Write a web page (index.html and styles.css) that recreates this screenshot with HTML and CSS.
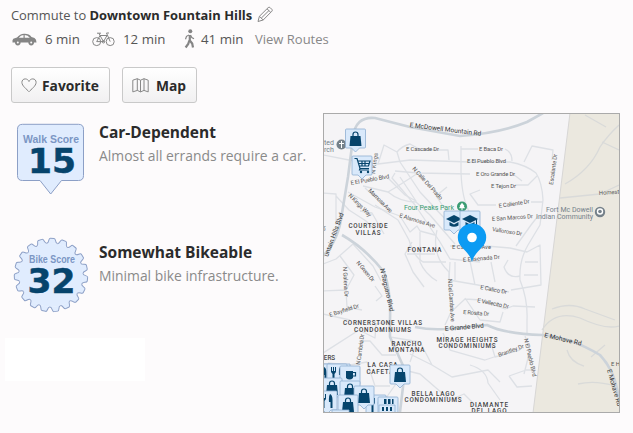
FILE: index.html
```html
<!DOCTYPE html>
<html lang="en">
<head>
    <meta charset="utf-8">
    <title>Walk Score</title>
    <link rel="stylesheet" href="styles.css">
</head>
<body>
    <div class="commute">
        <span>Commute to <strong>Downtown Fountain Hills</strong></span>
        <svg class="pencil" width="17" height="17" viewBox="0 0 17 17">
            <path d="M1 15.500 L2.400 10.300 L11.200 1.600 Q12.200 .8 13.200 1.700 L14.900 3.400 Q15.700 4.300 14.900 5.200 L6.200 14 Z M2.400 10.300 L6.200 14 M10 2.800 L13.800 6.400 M4.300 12.100 L12 4.500"/>
        </svg>
    </div>

    <div class="modes">
        <span class="mode car">
            <svg width="25" height="13" viewBox="0 0 25 13">
                <path d="M.5 9.500 V7.200 Q.7 5.500 3.500 5 L5 4.600 Q8 1 12 .8 Q17 .5 19.500 4 L22.500 5 Q24.500 6 24.500 9.500 Z"/>
                <circle cx="5.800" cy="9.600" r="2.800"/>
                <circle cx="19.200" cy="9.600" r="2.800"/>
                <path class="cut" d="M6.800 4.700 Q8.600 2.200 11.500 2 V4.700 Z M12.700 2 Q16 2 17.800 4.700 H12.700 Z"/>
                <circle class="cut" cx="5.800" cy="9.600" r="1"/>
                <circle class="cut" cx="19.200" cy="9.600" r="1"/>
            </svg>
            6 min
        </span>
        <span class="mode bike">
            <svg width="23" height="16" viewBox="0 0 23 16">
                <g class="line">
                    <circle cx="4.700" cy="10.600" r="4"/>
                    <circle cx="18.200" cy="10.600" r="4"/>
                    <path d="M4.700 10.600 L8 4.500 L11.500 10.600 Z M8 4.500 H15 L11.500 10.600 M18.200 10.600 L14.500 2 H17 M8 4.500 L7 2.200 M5 2.200 H9"/>
                    <circle cx="11.500" cy="10.800" r="1.200"/>
                </g>
            </svg>
            12 min
        </span>
        <span class="mode walk">
            <svg width="11" height="20" viewBox="0 0 11 20">
                <circle cx="6.300" cy="2.300" r="2"/>
                <g class="limbs">
                    <path d="M5.800 6 V11.500 L8.200 14.500 L9 18.500"/>
                    <path d="M5.300 11.500 L4.200 15 L1.600 18.500"/>
                    <path class="arm" d="M5 6 L2.500 7.300 L1.500 10.300 M6.500 6 L7.800 8.500 L10 9.800"/>
                </g>
            </svg>
            41 min
        </span>
        <a class="routes">View Routes</a>
    </div>

    <div class="buttons">
        <button class="favorite">
            <svg width="16" height="15" viewBox="0 0 16 15">
                <path d="M8 13.700 C5.800 11.300 1 8 .9 4.500 C.8 2.400 2.300 .9 4.200 .9 C6 .9 7.300 2 8 3.500 C8.700 2 10 .9 11.800 .9 C13.700 .9 15.200 2.400 15.100 4.500 C15 8 10.200 11.300 8 13.700 Z"/>
            </svg>
            Favorite
        </button>
        <button class="map-button">
            <svg width="17" height="15" viewBox="0 0 17 15">
                <path d="M.8 2.200 L5.300 .7 L8.500 2.200 L12 .7 L16.200 2.200 V13.900 L12 12.400 L8.500 13.900 L5.300 12.400 L.8 13.900 Z M5.300 .7 V12.400 M8.500 2.200 V13.900 M12 .7 V12.400"/>
            </svg>
            Map
        </button>
    </div>

    <div class="content">
        <div class="scores">
            <div class="score">
                <svg class="badge" width="76" height="76" viewBox="13 121 76 76">
                    <path class="badge-shape" d="M22.500 124.300 H78.500 Q83.500 124.300 83.500 129.300 V175.500 Q83.500 180.500 78.500 180.500 H61.500 L50.700 194 L40 180.500 H22.500 Q17.500 180.500 17.500 175.500 V129.300 Q17.500 124.300 22.500 124.300 Z"/>
                    <text class="badge-name" x="51" y="142.500" textLength="56" lengthAdjust="spacingAndGlyphs">Walk Score</text>
                    <text class="badge-value" x="52" y="173" textLength="48" lengthAdjust="spacingAndGlyphs">15</text>
                </svg>
                <div class="score-text">
                    <h2>Car-Dependent</h2>
                    <p>Almost all errands require a car.</p>
                </div>
            </div>
            <div class="score">
                <svg class="badge" width="76" height="76" viewBox="-38 -34 76 76">
                    <defs>
                        <path id="tooth" d="M-5.270 -31.600 C-2.600 -32 -4.200 -36.700 -2 -36.700 H1.800 C4 -36.700 2.600 -32 5.270 -31.600"/>
                    </defs>
                    <circle class="gear-fill" r="32"/>
                    <g class="badge-shape">
                        <use href="#tooth" transform="rotate(2)"/>
                        <use href="#tooth" transform="rotate(20.950)"/>
                        <use href="#tooth" transform="rotate(39.890)"/>
                        <use href="#tooth" transform="rotate(58.840)"/>
                        <use href="#tooth" transform="rotate(77.790)"/>
                        <use href="#tooth" transform="rotate(96.740)"/>
                        <use href="#tooth" transform="rotate(115.680)"/>
                        <use href="#tooth" transform="rotate(134.630)"/>
                        <use href="#tooth" transform="rotate(153.580)"/>
                        <use href="#tooth" transform="rotate(172.530)"/>
                        <use href="#tooth" transform="rotate(191.470)"/>
                        <use href="#tooth" transform="rotate(210.420)"/>
                        <use href="#tooth" transform="rotate(229.370)"/>
                        <use href="#tooth" transform="rotate(248.320)"/>
                        <use href="#tooth" transform="rotate(267.260)"/>
                        <use href="#tooth" transform="rotate(286.210)"/>
                        <use href="#tooth" transform="rotate(305.160)"/>
                        <use href="#tooth" transform="rotate(324.110)"/>
                        <use href="#tooth" transform="rotate(343.050)"/>
                    </g>
                    <text class="badge-name" x="1" y="-12.500" textLength="46" lengthAdjust="spacingAndGlyphs">Bike Score</text>
                    <text class="badge-value" x="0.500" y="18" textLength="48" lengthAdjust="spacingAndGlyphs">32</text>
                </svg>
                <div class="score-text">
                    <h2>Somewhat Bikeable</h2>
                    <p>Minimal bike infrastructure.</p>
                </div>
            </div>
            <div class="blank"></div>
        </div>

        <div class="map">
            <svg width="295" height="298" viewBox="324 114 295 298">
                <defs>
                    <g id="pin">
                        <path class="pin-box" d="M-9 -10 H9 Q10 -10 10 -9 V8 Q10 9 9 9 H4 L0 13 L-4 9 H-9 Q-10 9 -10 8 V-9 Q-10 -10 -9 -10 Z"/>
                    </g>
                    <g id="bag">
                        <use href="#pin"/>
                        <path class="ink" d="M-5 -3 H5 L6 7 H-6 Z"/>
                        <path class="handle" d="M-2.500 -2 V-4.500 Q-2.500 -7 0 -7 Q2.500 -7 2.500 -4.500 V-2"/>
                    </g>
                    <g id="cap">
                        <use href="#pin"/>
                        <path class="ink" d="M-8 -2 L0 -6 L8 -2 L0 2 Z M-4.500 1 L0 3.400 L4.500 1 V4.500 Q0 7 -4.500 4.500 Z M6 -1.500 H7 V4 H6 Z"/>
                    </g>
                    <g id="food">
                        <use href="#pin"/>
                        <path class="ink" d="M-6 -7 H-5 V-3 H-4 V-7 H-3 V-3 H-2 V-7 H-1 V-2 L-2.500 0 V7 H-4.500 V0 L-6 -2 Z M3 -7 Q5.500 -6 5.500 -1 V7 H3.500 V1 H2 Q1.500 -5 3 -7 Z"/>
                    </g>
                </defs>

                <path class="land" d="M570 113 H620 V413 H533 Z"/>

                <!-- side streets -->
                <g class="street">
                    <path d="M323 155 L349 160 L378 164 L410 160 L470 162 L510 162 Q526 165 536 173 Q542 182 543 200 L540 225 L528 245 Q519 260 520 280 Q528 300 527 320 L527 335"/>
                    <path d="M397 152 Q402 146 410 144 L421 150 H448 L449 160 M461 146 V172 Q462 200 470 213 L478 232 M461 149 H478 M505 149 Q512 152 512 161"/>
                    <path d="M378 164 L384 145 L397 152 L400 162 L420 192 L447 221"/>
                    <path d="M395 171 L418 173 L470 174 M418 173 Q400 185 388 192 L363 186 M400 177 L416 201 L405 195 L388 178"/>
                    <path d="M395 173 L392 178 L415 205 L440 242 L450 259 L480 262 M447 187 L436 196 L447 212 L463 236"/>
                    <path d="M513 174 L522 181 M515 185 H528 L537 176 M524 162 L532 146 L553 150 L552 160 M480 190 L470 194 L478 205 H496 M531 202 H543 M538 216 L531 225 L516 246"/>
                    <path d="M323 193 L336 194 V225 M336 196 L349 210 L366 221 L375 230 M348 192 L375 207 L400 216 M365 188 L386 207 M353 244 L336 259 L323 264"/>
                    <path d="M388 192 Q400 202 416 202 L430 215 L442 229 L455 244"/>
                    <path d="M360 211 L372 213 L384 234 M375 205 L398 220 L409 240 Q414 257 423 262 L446 262 M400 216 L410 232 L417 226 L420 231 L435 235"/>
                    <path d="M412 242 L405 254 L413 272 L424 287 M407 254 H435 M420 232 V262 Q425 274 437 281 M437 230 Q431 255 449 272 L449 285 L451 312 L445 325"/>
                    <path d="M450 246 H463 M486 246 L510 248 L527 252 L540 245 L541 285 L511 290 M538 262 H525 M538 275 H524"/>
                    <path d="M450 262 L449 280 L478 285 L509 292 M455 262 V280 M470 261 L475 285 M491 262 L495 282 M508 260 L504 267 Q508 279 520 276"/>
                    <path d="M340 256 L354 275 L346 290 L347 307 L362 310 M353 244 L373 266 L381 281 M323 291 L346 290 M323 314 L350 320 M375 286 L382 296 L376 301"/>
                    <path d="M323 353 L359 330 L375 338 L376 324 L389 322 M359 341 L370 341 L382 355 H396 M328 363 L350 365 L367 362 L375 386 H390"/>
                    <path d="M451 312 L465 299 L481 300 L505 309 L513 306 L535 307 M465 298 L480 320 L500 322 L503 312"/>
                    <path d="M390 337 L420 342 L432 365 L452 377 L488 370 L500 382 M432 365 L410 354 M410 362 L416 345"/>
                    <path d="M443 333 L450 350 L485 360 L497 356 M490 340 L495 357 L520 350 M470 365 Q487 370 488 383 L500 400 M525 336 L530 350 L524 374 M509 376 L526 370 H532 M509 376 L517 387 L532 386"/>
                    <path d="M404 370 L420 374 L450 400 L464 394 L480 410 M405 371 L386 398"/>
                </g>
                <g class="trail">
                    <path d="M565 184 Q590 170 600 147 Q608 135 619 125 M585 115 L606 127 M602 142 L619 150 M560 198 L600 194 L619 185"/>
                    <path d="M542 330 Q555 310 580 318 Q605 330 619 326 M552 309 Q570 302 585 309 L615 320 M567 350 Q570 362 584 366 M578 384 Q595 380 615 386 M591 357 L605 345"/>
                </g>

                <!-- main roads -->
                <g class="road">
                    <path d="M323 256 Q339 240 342 213 L348 177 L353 138 Q355 116 375 118 L410 127 L460 136 Q500 133 527 122 L543 113"/>
                    <path d="M342 235 Q365 248 384 272 Q391 290 390 320 L390 337 L405 370 L400 412"/>
                    <path d="M415 327 Q430 330 445 329 L487 325 Q505 334 542 335 Q570 337 600 355 Q616 372 619 400"/>
                </g>

                <g class="street-name">
                    <text class="strong" transform="translate(409.500 127) rotate(7)" textLength="72">E McDowell Mountain Rd</text>
                    <text x="406" y="151" textLength="33">E Cascade Dr</text>
                    <text x="479" y="151" textLength="24">E Baca Dr</text>
                    <text x="467" y="163" textLength="39">E El Pueblo Blvd</text>
                    <text x="476" y="176" textLength="39">E Oro Grande Dr</text>
                    <text x="491" y="188" textLength="25">E Tejon Dr</text>
                    <text transform="translate(499 208) rotate(-9)" textLength="31">E Caliente Dr</text>
                    <text transform="translate(492 221) rotate(-4)" textLength="41">E San Marcos Dr</text>
                    <text transform="translate(492 231) rotate(9)" textLength="30">Valloroso Dr</text>
                    <text transform="translate(553 185) rotate(-82)" textLength="31">Escalante Dr</text>
                    <text transform="translate(351 185) rotate(-10)" textLength="39">E El Pueblo Blvd</text>
                    <text transform="translate(375 174) rotate(-82)" textLength="21">N Kings</text>
                    <text transform="translate(412 169) rotate(48)" textLength="42">N Calle Del Prado</text>
                    <text transform="translate(348 196) rotate(45)" textLength="30">N Kings Way</text>
                    <text transform="translate(368 191) rotate(45)" textLength="31">Mamosa Ave</text>
                    <text transform="translate(399 217) rotate(17)" textLength="37">E Alamosa Ave</text>
                    <text x="452" y="249" textLength="39">E Cascada Ave</text>
                    <text transform="translate(463 262) rotate(-5)" textLength="37">E Ensenada Dr</text>
                    <text transform="translate(480 289) rotate(11)" textLength="27">E Calico Dr</text>
                    <text transform="translate(477 302) rotate(12)" textLength="32">E Vallecito Dr</text>
                    <text transform="translate(463 314) rotate(4)" textLength="26">E Rosita Dr</text>
                    <text transform="translate(448 279) rotate(86)" textLength="43">N Del Cambre Ave</text>
                    <text class="strong" transform="translate(328 257) rotate(-70)" textLength="46">untain Hills Blvd</text>
                    <text class="strong" transform="translate(380 269) rotate(77)" textLength="44">N Saguaro Blvd</text>
                    <text transform="translate(356 263) rotate(50)" textLength="25">N Green Dr</text>
                    <text transform="translate(343 267) rotate(87)" textLength="30">N Galena Dr</text>
                    <text transform="translate(330 317) rotate(-18)" textLength="31">E Bayfield Dr</text>
                    <text transform="translate(360 365) rotate(-82)" textLength="31">N Cambria Dr</text>
                    <text class="strong" transform="translate(445 331) rotate(-5)" textLength="39">E Grande Blvd</text>
                    <text class="strong" transform="translate(544 337) rotate(13)" textLength="38">E Mohave Rd</text>
                    <text class="strong" transform="translate(607 370) rotate(74)" textLength="38">E Mohave Rd</text>
                    <text x="611" y="366">E H</text>
                    <text transform="translate(499 357) rotate(-20)" textLength="27">Brantley Dr</text>
                    <text transform="translate(524 339) rotate(77)" textLength="39">N El Pueblo Blvd</text>
                    <text transform="translate(599 195) rotate(-4)">Homest</text>
                    <text transform="translate(325 231) rotate(-82)">Dr</text>
                </g>

                <g class="area">
                    <text x="368" y="228" textLength="39">COURTSIDE</text>
                    <text x="368" y="235" textLength="25">VILLAS</text>
                    <text x="424.500" y="251.500" textLength="34">FONTANA</text>
                    <text x="382.500" y="325" textLength="79">CORNERSTONE VILLAS</text>
                    <text x="382.500" y="331.500" textLength="57">CONDOMINIUMS</text>
                    <text x="406.500" y="345.500" textLength="30">RANCHO</text>
                    <text x="406.500" y="352" textLength="36">MONTANA</text>
                    <text x="467" y="341.500" textLength="61">MIRAGE HEIGHTS</text>
                    <text x="467" y="348" textLength="57">CONDOMINIUMS</text>
                    <text x="382.500" y="367" textLength="30">LA CASA</text>
                    <text x="382" y="373.500" textLength="31">CAFETAL</text>
                    <text x="433" y="395.500" textLength="43">BELLA LAGO</text>
                    <text x="433" y="402" textLength="57">CONDOMINIUMS</text>
                    <text x="489" y="406.500" textLength="38">DIAMANTE</text>
                    <text x="489" y="413" textLength="35">DEL LAGO</text>
                    <text x="329.500" y="360">ERS</text>
                </g>

                <g class="place">
                    <text x="324" y="144.500">ted</text>
                    <text x="324" y="151.500">rch</text>
                    <circle cx="341.500" cy="144.500" r="5"/>
                    <path class="cross" d="M341.500 141 V148 M339 143.500 H344"/>
                    <text x="546" y="211.500" textLength="47">Fort Mc Dowell</text>
                    <text x="536" y="219" textLength="57">Indian Community</text>
                    <circle cx="600" cy="212" r="5.200"/>
                    <circle class="hole" cx="600" cy="211.500" r="3.200"/>
                    <circle cx="600" cy="211.500" r="1.800"/>
                </g>
                <g class="park">
                    <text x="404" y="209.500" textLength="50">Four Peaks Park</text>
                    <circle cx="462" cy="206.500" r="5"/>
                    <path class="tree" d="M462 202.800 L464.500 206 H463.800 L465 208.300 H462.500 V210 H461.500 V208.300 H459 L460.200 206 H459.500 Z"/>
                </g>

                <!-- amenities -->
                <use href="#bag" x="355.500" y="139"/>
                <use href="#pin" x="362" y="166"/>
                <path class="cart" d="M354.500 158.500 H357 L360 168.500 H369 M358 161 H370 L368.500 166 H359.500 M359 163.500 H369 M362 161 V166 M365 161 V166 M360 168.500 L359.500 170 H369"/>
                <circle class="ink" cx="361" cy="172" r="1.200"/>
                <circle class="ink" cx="368" cy="172" r="1.200"/>
                <use href="#cap" x="454" y="221"/>
                <use href="#cap" x="470" y="221"/>
                <use href="#bag" x="400" y="375"/>
                <path class="pin-box" d="M324 364 H350 V370 H324 Z"/>
                <use href="#food" x="321" y="374"/>
                <use href="#food" x="337" y="374"/>
                <use href="#pin" x="350" y="376"/>
                <path class="ink" d="M346 371 H353 V378 Q349.500 381 346 378 Z M345 381 H354 V382 H345 Z"/>
                <path class="handle" d="M353 372.500 H355.500 V376 H353"/>
                <use href="#bag" x="332" y="388"/>
                <use href="#bag" x="350" y="391"/>
                <use href="#food" x="327" y="401"/>
                <use href="#food" x="376" y="405"/>
                <use href="#bag" x="364" y="396"/>
                <use href="#bag" x="348" y="405"/>
                <use href="#pin" x="388" y="407"/>
                <path class="ink" d="M384 399 H386.500 V404 H384 Z M388 399 H390.500 V404 H388 Z M392 399 H393.500 V404 H392 Z"/>
                <path class="pin-box" d="M379 405 H395 V413 H379 Z M332 410 H349 V414 H332 Z"/>
                <path class="ink" d="M382 407 H384 V411 H382 Z M386 407 H388 V411 H386 Z M390 407 H392 V411 H390 Z"/>

                <!-- home marker -->
                <path class="marker" d="M472 262 C469 250 457.800 248 457.800 237.500 A14.200 14 0 0 1 486.200 237.500 C486.200 248 475 250 472 262 Z"/>
                <circle class="marker-dot" cx="472" cy="237.500" r="4.800"/>
            </svg>
        </div>
    </div>
</body>
</html>
```
FILE: styles.css
```css
body {
    margin: 0;
    padding: 6px 13px 0 11px;
    background: #fdfbfc;
    color: #555;
    font-family: "Open Sans", sans-serif;
    font-size: 13.3px;
    line-height: 19px;
    overflow: hidden;
}
svg {
    display: block;
    flex: none;
}
.commute {
    display: flex;
    gap: 5px;
    height: 20px;
    font-size: 12.9px;
    white-space: nowrap;
}
.commute strong {
    color: #2b2b2b;
}
.pencil path {
    fill: none;
    stroke: #888;
}
.modes {
    display: flex;
    align-items: center;
    height: 26px;
    white-space: nowrap;
}
.mode {
    display: flex;
    align-items: center;
    fill: #858585;
}
.car {
    gap: 8px;
    padding-left: 1px;
    width: 80px;
}
.bike {
    gap: 8px;
    width: 92px;
}
.walk {
    gap: 6px;
    width: 71px;
}
.cut {
    fill: #fdfbfc;
}
.line {
    fill: none;
    stroke: #858585;
}
.limbs {
    fill: none;
    stroke: #858585;
    stroke-width: 2.2;
}
.limbs .arm {
    stroke-width: 1.2;
}
.routes {
    color: #888;
    font-size: 13px;
}
.buttons {
    display: flex;
    gap: 12px;
    margin-top: 15px;
}
button {
    display: flex;
    align-items: center;
    box-sizing: border-box;
    height: 36px;
    padding: 0 9px;
    border: 1px solid #c9c9c9;
    border-radius: 3px;
    background: linear-gradient(#fff, #f1f0f1);
    color: #2b2b2b;
    font: bold 13.8px "Open Sans", sans-serif;
}
button path {
    fill: none;
    stroke: #888;
}
.favorite {
    gap: 5px;
    width: 99px;
}
.map-button {
    gap: 7px;
    width: 75px;
}
.content {
    display: flex;
    justify-content: space-between;
    margin-top: 10px;
}
.scores {
    width: 305px;
    padding-top: 8px;
}
.score {
    display: flex;
    gap: 10px;
    height: 120px;
    padding-left: 2px;
}
.score .badge {
    overflow: visible;
}
.score-text {
    white-space: nowrap;
}
.score h2 {
    margin: 0;
    color: #2b2b2b;
    font-size: 15.5px;
    line-height: 22px;
}
.score p {
    margin: 2px 0 0;
    color: #8a8a8a;
    font-size: 13.9px;
    line-height: 22px;
}
.badge-shape {
    fill: #e0ecfe;
    stroke: #8c9fc6;
}
.gear-fill {
    fill: #e0ecfe;
}
.badge-name {
    fill: #7b96c4;
    font: bold 11.5px "Liberation Sans", sans-serif;
    text-anchor: middle;
}
.badge-value {
    fill: #06446c;
    stroke: #06446c;
    stroke-width: .5;
    font: bold 34.5px "DejaVu Sans", sans-serif;
    text-anchor: middle;
}
.blank {
    width: 140px;
    height: 43px;
    margin-left: -6px;
    margin-top: -23px;
    background: #fff;
}

/* map */
.map {
    width: 295px;
    height: 298px;
    border: 1px solid #aaa;
    background: #f5f4f6;
}
.map text {
    font-family: Roboto, sans-serif;
}
.land {
    fill: #ebe8df;
    stroke: #d7d6d5;
}
.street,
.trail,
.road {
    fill: none;
    stroke: #dde0e5;
    stroke-width: 1.3;
    stroke-linejoin: round;
}
.trail {
    stroke: #d9dad9;
}
.road {
    stroke: #ccd3da;
    stroke-width: 2.6;
}
.street-name text {
    fill: #555;
    font-size: 5.8px;
}
.street-name .strong {
    fill: #333;
    font-size: 6.5px;
}
.area {
    fill: #444;
    font-size: 6.3px;
    font-weight: 500;
    text-anchor: middle;
}
.place {
    fill: #75818a;
    font-size: 7px;
}
.cross {
    stroke: #fff;
}
.hole {
    fill: #fff;
}
.park {
    fill: #3a9c72;
    font-size: 7px;
}
.tree {
    fill: #fff;
}
.pin-box {
    fill: #d9e9fb;
    stroke: #8faed2;
    stroke-width: .8;
}
.ink {
    fill: #06446c;
}
.handle,
.cart {
    fill: none;
    stroke: #06446c;
    stroke-width: 1.2;
}
.marker {
    fill: #0c9bf3;
}
.marker-dot {
    fill: #fff;
}
```
